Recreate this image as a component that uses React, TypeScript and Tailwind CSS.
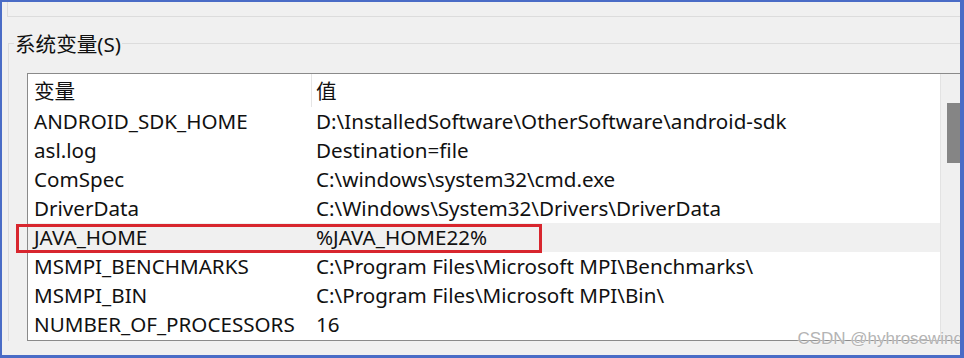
const rows = [
  { name: 'ANDROID_SDK_HOME', value: 'D:\\InstalledSoftware\\OtherSoftware\\android-sdk' },
  { name: 'asl.log', value: 'Destination=file' },
  { name: 'ComSpec', value: 'C:\\windows\\system32\\cmd.exe' },
  { name: 'DriverData', value: 'C:\\Windows\\System32\\Drivers\\DriverData' },
  { name: 'JAVA_HOME', value: '%JAVA_HOME22%', marked: true },
  { name: 'MSMPI_BENCHMARKS', value: 'C:\\Program Files\\Microsoft MPI\\Benchmarks\\' },
  { name: 'MSMPI_BIN', value: 'C:\\Program Files\\Microsoft MPI\\Bin\\' },
  { name: 'NUMBER_OF_PROCESSORS', value: '16' },
];

export default function App() {
  return (
    <div className="relative w-[964px] h-[358px] overflow-hidden bg-[#f0f0f0] border-[#4a6cc6] border-t-2 border-l-2 border-r-4 border-b-[3px] font-['Noto_Sans','Noto_Sans_CJK_SC',sans-serif] text-[20.6px] text-[#111]">
      {/* previous group box tail */}
      <div className="ml-[5px] h-[15px] border-l border-b border-[#dcdcdc]" />

      {/* 系统变量 group */}
      <div className="relative mt-[26px] ml-[6px] border-t border-l border-[#dcdcdc] pl-[18px] pt-[29px]">
        <span className="absolute left-[5px] -top-[13px] bg-[#f0f0f0] px-[1px] leading-[26px]">系统变量(S)</span>

        <div className="w-[960px] h-[268px] border border-[#8a8a8a] bg-white flex">
          <div className="w-[913px] border-r border-[#e3e3e3]">
            <div className="flex h-[33px] items-center">
              <div className="w-[284px] h-full pl-[6px] pt-[2px] flex items-center border-r border-[#e5e5e5]">变量</div>
              <div className="pl-[4px] pt-[2px]">值</div>
            </div>
            {rows.map((r) => (
              <div
                key={r.name}
                className={`relative flex h-[29px] items-center ${r.marked ? 'bg-[#f0f0f0]' : ''}`}
              >
                <div className="w-[284px] pl-[6px] whitespace-nowrap">{r.name}</div>
                <div className="pl-[4px] whitespace-nowrap">{r.value}</div>
                {r.marked && (
                  <div className="absolute -left-[12px] top-[1px] w-[526px] h-[29px] border-[3px] border-[#d8262e]" />
                )}
              </div>
            ))}
          </div>
          <div className="w-[20px] bg-[#f0f0f0] pt-[29px] pl-[6px]">
            <div className="w-[14px] h-[60px] bg-[#858585]" />
          </div>
        </div>
      </div>

      <span className="absolute right-[-3px] bottom-[4px] text-[17px] text-[#b4b4b4] font-['Liberation_Sans',sans-serif] [text-shadow:0_0_2px_#ffffff]">
        CSDN @hyhrosewind
      </span>
    </div>
  );
}
